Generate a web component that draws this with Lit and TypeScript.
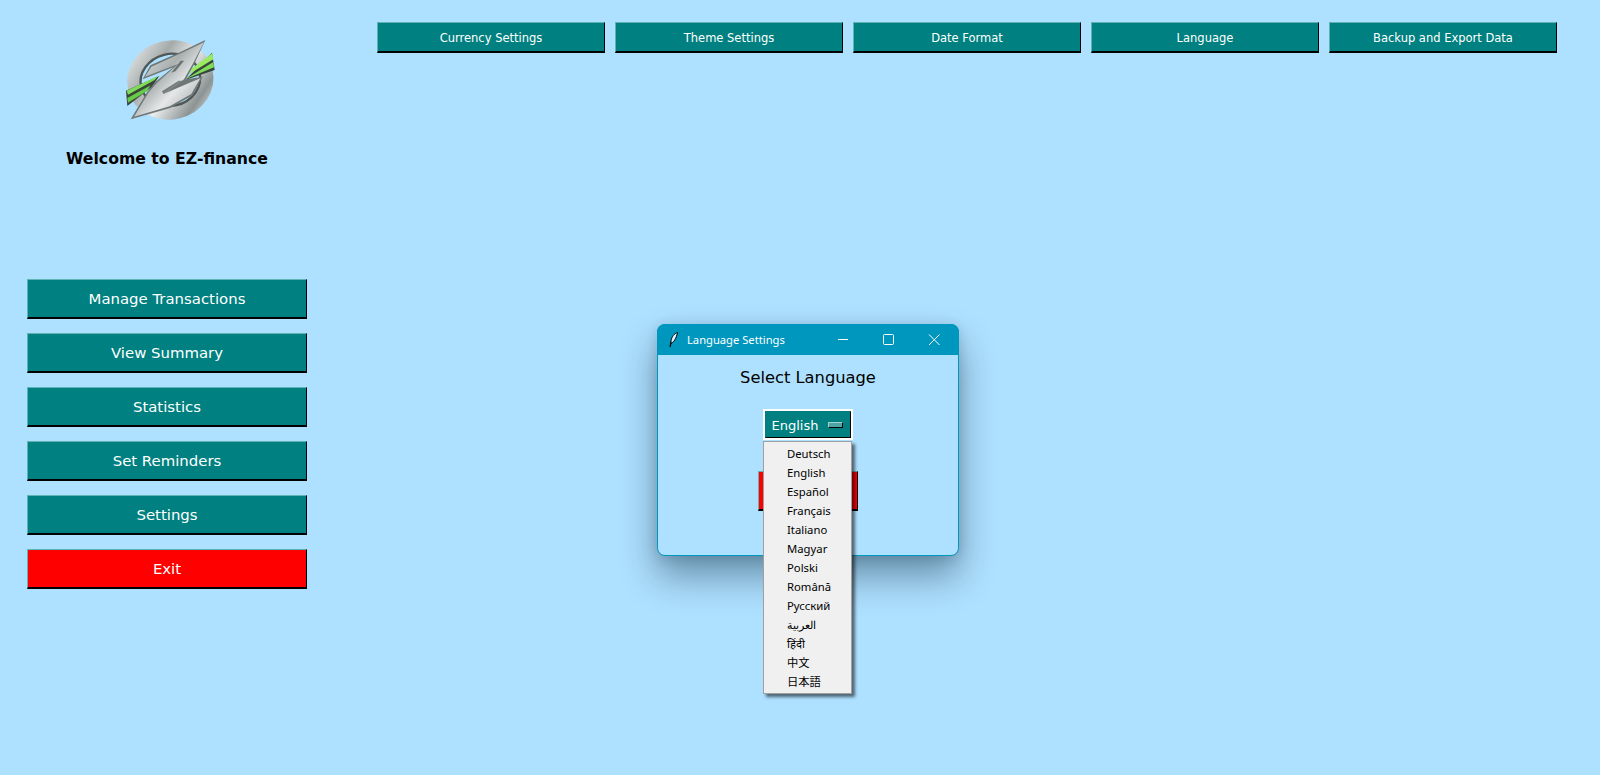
import { LitElement, html, css, svg } from "lit";
import { customElement } from "lit/decorators.js";

const NAV = ["Manage Transactions", "View Summary", "Statistics", "Set Reminders", "Settings"];
const TOP = ["Currency Settings", "Theme Settings", "Date Format", "Language", "Backup and Export Data"];
const LANGS = ["Deutsch", "English", "Español", "Français", "Italiano", "Magyar", "Polski", "Română", "Русский", "العربية", "हिंदी", "中文", "日本語"];

const logo = svg`<svg class="logo" viewBox="0 0 390 330" width="130" height="110" aria-hidden="true">
  <defs>
    <linearGradient id="ring" x1="0" y1="0" x2="1" y2="1">
      <stop offset="0" stop-color="#e2e5e5"/><stop offset=".3" stop-color="#a4aaaa"/><stop offset=".55" stop-color="#eceeee"/><stop offset=".85" stop-color="#8c9393"/><stop offset="1" stop-color="#d0d4d4"/>
    </linearGradient>
    <linearGradient id="zed" x1="0" y1="0" x2="1" y2="1">
      <stop offset="0" stop-color="#eceeee"/><stop offset=".42" stop-color="#aab0b0"/><stop offset=".62" stop-color="#e6e8e8"/><stop offset="1" stop-color="#8b9292"/>
    </linearGradient>
  </defs>
  <g transform="rotate(-14 205 180)">
    <ellipse cx="205" cy="180" rx="110" ry="98" fill="none" stroke="url(#ring)" stroke-width="40"/>
    <ellipse cx="205" cy="180" rx="90" ry="78" fill="none" stroke="#4f5757" stroke-width="7"/>
  </g>
  <path d="M72 212 L172 168 L150 200 L76 258 Z" fill="#39443b"/>
  <path d="M74 212 L168 168 L158 180 L78 224 Z" fill="#7fdc58"/>
  <path d="M76 234 L146 196 L134 214 L78 248 Z" fill="#66cc48"/>
  <path d="M250 180 L330 98 L338 150 Z" fill="#39443b"/>
  <path d="M270 145 L331 100 L334 118 L262 162 Z" fill="#9aea62"/>
  <path d="M250 178 L334 126 L336 142 Z" fill="#7fdc58"/>
  <path d="M310 60 L278 130 L252 178 L302 170 L272 226 L205 264 L86 298 L136 215 L160 186 L214 142 L122 178 L145 136 L235 96 Z" fill="#6f7777"/>
  <path d="M306 67 L274 128 L246 178 L184 222 L295 175 L268 222 L203 259 L96 290 L140 217 L165 188 L228 132 L129 170 L148 140 L237 100 Z" fill="url(#zed)"/>
  <path d="M236 122 L208 158 L220 154 L246 122 Z" fill="#6b7272"/>
  <path d="M184 222 L240 182 L230 182 L180 214 Z" fill="#767d7d"/>
</svg>`;

const feather = svg`<svg class="feather" viewBox="0 0 10 16" width="10" height="16" aria-hidden="true">
  <path d="M8.6 .6 C5.4 1.4 2.6 4.6 2 9 L1.9 11.2 C4.6 10.6 7 7 8.6 .6 Z" fill="#dff3ff" stroke="#000" stroke-width="1"/>
  <path d="M2 10.5 L1 15" stroke="#000" stroke-width="1.2" fill="none"/>
</svg>`;

@customElement("app-root")
export class AppRoot extends LitElement {
  static styles = css`
    :host {
      display: block;
      height: 775px;
      overflow: hidden;
      background: #aee0ff;
      font-family: "DejaVu Sans", Verdana, sans-serif;
      position: relative;
    }
    .page { display: flex; height: 100%; }
    .side {
      width: 280px;
      margin-left: 27px;
      display: flex;
      flex-direction: column;
      align-items: center;
      flex: none;
    }
    .logo { margin-top: 20px; display: block; }
    .welcome {
      margin: 19px 0 0;
      font-size: 15.7px;
      line-height: 19px;
      font-weight: 700;
      color: #000;
      white-space: nowrap;
    }
    .nav { margin-top: 111px; display: flex; flex-direction: column; gap: 14px; width: 100%; }
    .btn {
      box-sizing: border-box;
      border: 1px solid;
      border-color: #5fb3b3 #000 #000 #5fb3b3;
      border-bottom-width: 2px;
      background: #008080;
      color: #fff;
      padding: 1px 0 0;
      font: inherit;
      display: flex;
      align-items: center;
      justify-content: center;
      white-space: nowrap;
    }
    .nav .btn { height: 40px; font-size: 14.9px; }
    .btn.red { background: #ff0000; }
    .top { display: flex; gap: 10px; margin: 22px 0 0 70px; align-items: flex-start; }
    .top .btn { width: 228px; height: 31px; font-size: 11.5px; }
    .win {
      position: absolute;
      left: 657px;
      top: 324px;
      width: 302px;
      height: 232px;
      box-sizing: border-box;
      background: #aee0ff;
      border: 1px solid #0097be;
      border-radius: 8px;
      box-shadow: 0 20px 36px rgba(0, 30, 50, 0.42), 0 2px 12px rgba(0, 30, 50, 0.15);
    }
    .bar {
      height: 31px;
      margin: -1px -1px 0;
      background: #0097be;
      border-radius: 8px 8px 0 0;
      display: flex;
      align-items: center;
      color: #fff;
      font: 11.2px "Noto Sans", "Open Sans", sans-serif;
      padding-left: 12px;
    }
    .feather { flex: none; margin-right: 8px; }
    .ctrls { margin-left: auto; margin-right: 1px; display: flex; align-self: flex-start; }
    .ctrls svg { display: block; width: 45px; height: 30px; }
    .body { display: flex; flex-direction: column; align-items: center; }
    .heading { margin: 13px 0 0; font-size: 16.3px; line-height: 20px; font-weight: 400; color: #000; }
    .picker {
      box-sizing: border-box;
      width: 90px;
      height: 31px;
      margin-top: 21px;
      border: 2px solid #fff;
      display: flex;
    }
    .picker-in {
      flex: 1;
      background: #008080;
      color: #fff;
      border: 1px solid;
      border-color: #008080 #000 #000 #008080;
      display: flex;
      align-items: center;
      padding: 1px 0 0 5.5px;
      font-size: 13px;
    }
    .ind {
      margin-left: auto;
      margin-right: 7px;
      width: 15px;
      height: 6px;
      box-sizing: border-box;
      background: #4fa5a5;
      border: 1px solid;
      border-color: #9fd0d0 #000 #000 #9fd0d0;
    }
    .save { width: 100px; height: 40px; margin-top: 31px; }
    .menu {
      position: absolute;
      left: 763px;
      top: 441px;
      width: 89px;
      height: 253px;
      box-sizing: border-box;
      background: #f0f0f0;
      border: 1px solid #a0a0a0;
      box-shadow: 3px 3px 3px rgba(0, 0, 0, 0.55);
      padding: 2px 0 0 23px;
      font: 11.3px "Noto Sans", "Noto Sans CJK JP", sans-serif;
      color: #000;
    }
    .menu div { height: 19px; line-height: 19px; white-space: nowrap; }
  `;

  render() {
    return html`
      <div class="page">
        <aside class="side">
          ${logo}
          <h1 class="welcome">Welcome to EZ-finance</h1>
          <nav class="nav">
            ${NAV.map((n) => html`<button class="btn">${n}</button>`)}
            <button class="btn red">Exit</button>
          </nav>
        </aside>
        <div class="top">
          ${TOP.map((t) => html`<button class="btn">${t}</button>`)}
        </div>
      </div>
      <section class="win">
        <div class="bar">
          ${feather}<span>Language Settings</span>
          <div class="ctrls">
            <svg viewBox="0 0 45 30" aria-hidden="true"><path d="M15 15.5H25" stroke="#fff" fill="none"/></svg>
            <svg viewBox="0 0 45 30" aria-hidden="true"><rect x="15.5" y="10.5" width="10" height="10" rx="1" stroke="#fff" fill="none"/></svg>
            <svg viewBox="0 0 45 30" aria-hidden="true"><path d="M16 10.5L26.5 21M26.5 10.5L16 21" stroke="#fff" fill="none"/></svg>
          </div>
        </div>
        <div class="body">
          <h2 class="heading">Select Language</h2>
          <div class="picker"><div class="picker-in">English<span class="ind"></span></div></div>
          <button class="btn red save" aria-label="Save"></button>
        </div>
      </section>
      <div class="menu">
        ${LANGS.map((l) => html`<div>${l}</div>`)}
      </div>
    `;
  }
}
